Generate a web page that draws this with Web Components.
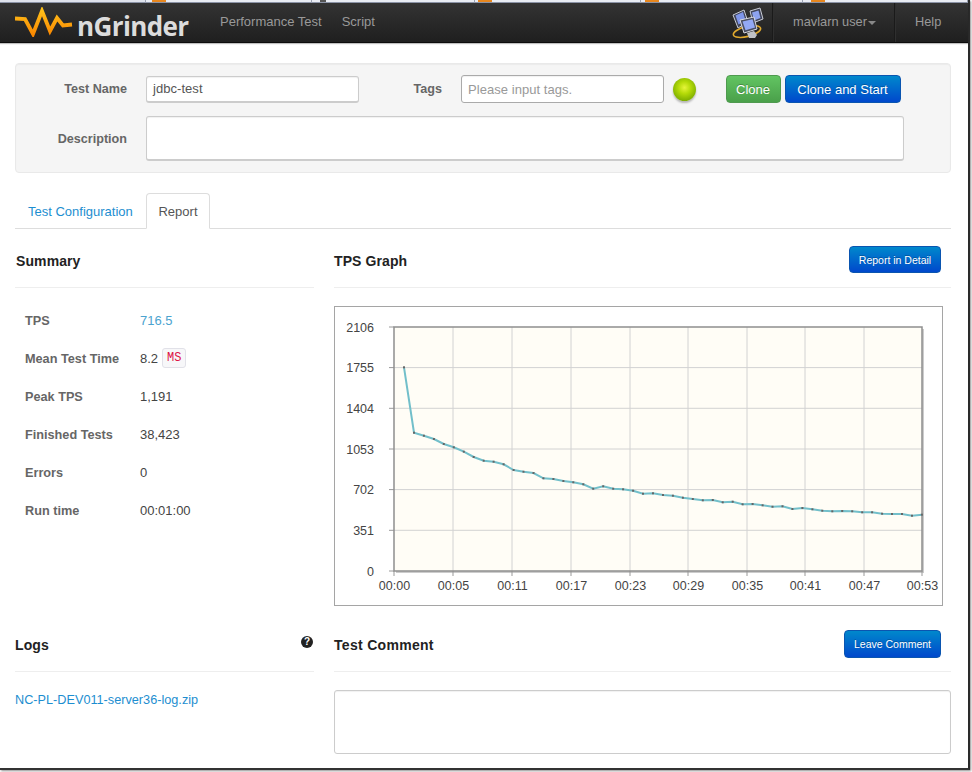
<!DOCTYPE html>
<html lang="en">
<head>
<meta charset="utf-8">
<title>nGrinder</title>
<style>
html,body{margin:0;padding:0;background:#fff;}
body{font-family:"Liberation Sans",Arial,sans-serif;font-size:13px;color:#555;}
</style>
</head>
<body>
<ng-app>
  <ng-strip slot="strip"></ng-strip>
  <ng-navbar slot="nav"></ng-navbar>
  <ng-test-form></ng-test-form>
  <ng-tabs></ng-tabs>
  <ng-report></ng-report>
</ng-app>
<script>
function define(name, html, setup){
  customElements.define(name, class extends HTMLElement{
    connectedCallback(){
      if(this.shadowRoot) return;
      const r=this.attachShadow({mode:'open'});
      r.innerHTML = typeof html==='function' ? html(this) : html;
      if(setup) setup(r,this);
    }
  });
}

define('ng-app',`<style>
:host{display:block;width:972px;height:772px;overflow:hidden;position:relative;background:#fff;}
.frame{width:968px;height:768px;box-sizing:content-box;border-right:2px solid #2a2a2a;border-bottom:2px solid #333;box-shadow:1px 1px 2px rgba(0,0,0,.45);display:flex;flex-direction:column;}
main{padding:20px 17px 0 15px;display:flex;flex-direction:column;}
</style>
<div class="frame"><slot name="strip"></slot><slot name="nav"></slot><main><slot></slot></main></div>`);

define('ng-strip',`<style>
:host{display:flex;height:3px;background:#eef0f5;}
div{box-sizing:border-box;height:3px;border-bottom:1px solid #8b93a6;border-right:1px solid #9aa1b2;background:#e9ecf3;position:relative;flex:none;}
i{display:block;position:absolute;top:0;height:2px;width:14px;background:#e8871e;}
i.d{background:#555;width:6px}
</style>
<div style="width:146px;background:#dfe3ec"></div>
<div style="width:166px"><i style="left:6px"></i></div>
<div style="width:163px"><i class="d" style="left:8px"></i></div>
<div style="width:166px"><i style="left:3px"></i></div>
<div style="width:162px"><i style="left:4px"></i></div>
<div style="width:165px"><i style="left:8px"></i></div>`);

define('ng-navbar',`<style>
:host{display:flex;align-items:stretch;height:40px;box-sizing:border-box;background:linear-gradient(#333,#1f1f1f);border-bottom:1px solid #0c0c0c;box-shadow:0 1px 1px rgba(0,0,0,.25);font:13px "Liberation Sans",Arial,sans-serif;color:#999;}
.brand{display:flex;align-items:flex-start;padding-left:15px;width:205px;box-sizing:border-box;flex:none;}
.brand svg{flex:none;display:block;margin-top:4px}
.brand b{font:700 26px/40px "Open Sans",sans-serif;color:#dcdcdc;margin-left:4px;letter-spacing:-.6px;margin-top:3px;white-space:nowrap}
.links{display:flex;gap:20px;align-items:center;margin-top:-2px;flex:1;}
.pc{display:flex;align-items:center;margin-right:10px;margin-top:1px}
.item{display:flex;align-items:center;border-left:1px solid #2f2f2f;padding-bottom:2px;box-shadow:-1px 0 0 #1a1a1a;font-size:12.800px}
.user{width:122px;padding-left:19px;box-sizing:border-box;margin-left:-1px}
.help{width:73px;padding-left:19px;box-sizing:border-box;}
.caret{display:inline-block;border:4px solid transparent;border-top-color:#888;border-bottom:0;margin-left:1px;margin-top:2px}
</style>
<div class="brand">
<svg width="58" height="30" viewBox="0 0 58 30"><defs><linearGradient id="lg" gradientUnits="userSpaceOnUse" x1="0" y1="2" x2="0" y2="29"><stop offset="0" stop-color="#ffc21a"/><stop offset="1" stop-color="#f98500"/></linearGradient></defs>
<path d="M0 11.500 10 12 18 27 27 4 35 24 42 11 48 18.500 57 17.500" fill="none" stroke="url(#lg)" stroke-width="3.800" stroke-linejoin="miter" stroke-miterlimit="3"/></svg>
<b>nGrinder</b></div>
<div class="links" style="margin-left:15px"><span>Performance Test</span><span>Script</span></div>
<div class="pc">
<svg width="33" height="33" viewBox="0 0 33 33">
<ellipse cx="16" cy="24.5" rx="14" ry="5" fill="none" stroke="#e0a92e" stroke-width="1.6" transform="rotate(-14 16 24.5)"/>
<path d="M2 8 13 3l4 12-10 6z" fill="#3f4458" stroke="#c9ccd6" stroke-width="1"/><path d="M4.500 8.500 12 5l2.500 8.500-7 4z" fill="#7f96ea"/>
<path d="M19 4l10-3 3 11-10 4z" fill="#3f4458" stroke="#c9ccd6" stroke-width="1"/><path d="M21 5.500l6.500-2 2 7.500-6.500 2.500z" fill="#8da3f0"/>
<path d="M9 13l14-3 3 12-13 4z" fill="#4b4f62" stroke="#d8dae2" stroke-width="1"/><path d="M11.500 14.500 21.500 12.300 24 20.500 14.500 23.300z" fill="#93a9f5"/>
<path d="M16 26l7-2 3 4-2 3h-6z" fill="#bfc1c6"/>
</svg></div>
<div class="item user"><span>mavlarn user</span><i class="caret"></i></div>
<div class="item help"><span>Help</span></div>`);

define('ng-btn',(h)=>`<style>
:host{display:inline-flex;align-items:center;justify-content:center;box-sizing:border-box;height:${h.getAttribute('h')||28}px;width:${h.getAttribute('w')}px;border-radius:4px;color:#fff;font:${h.getAttribute('fs')||13}px "Liberation Sans",Arial,sans-serif;text-shadow:0 -1px 0 rgba(0,0,0,.25);flex:none;}
:host([kind=green]){background:linear-gradient(#62c462,#4aa04a);border:1px solid #4f9a4f;}
:host([kind=blue]){background:linear-gradient(#0088cc,#0048cc);border:1px solid #0a55b0;}
</style><slot></slot>`);

define('ng-field',(h)=>`<style>
:host{box-sizing:border-box;background:#fff;border:1px solid #ccc;border-bottom-width:2px;border-right-width:1.500px;border-radius:3px;box-shadow:inset 0 1px 1px rgba(0,0,0,.06);padding:0 6px;color:#555;font:13px "Liberation Sans",Arial,sans-serif;letter-spacing:.05px;display:flex;align-items:center;flex:none;}
:host([dark]){border:1.500px solid #aaa;color:#999}
</style><slot></slot>`);

define('ng-label',`<style>
:host{display:block;font:bold 12.600px "Liberation Sans",Arial,sans-serif;color:#666;text-align:right;flex:none;}
</style><slot></slot>`);

define('ng-test-form',`<style>
:host{display:flex;flex-direction:column;gap:13px;box-sizing:border-box;height:110px;padding:11px 46px 0 0;background:#f5f5f5;border:1px solid #e9e9e9;border-radius:4px;box-shadow:inset 0 1px 1px rgba(0,0,0,.04);}
.row{display:flex;align-items:center;}
ng-label.a{width:111px;margin-right:19px}
.ball{width:23px;height:23px;border-radius:50%;flex:none;margin:0 29.500px 0 9px;background:radial-gradient(circle at 50% 42%,#e6f53a 0,#b4da08 35%,#76a800 80%,#5a8a00 100%);box-shadow:0 2px 2px rgba(0,0,0,.25);}
</style>
<div class="row" style="height:28px">
 <ng-label class="a">Test Name</ng-label>
 <ng-field style="width:213px;height:27px">jdbc-test</ng-field>
 <ng-label style="width:83px;margin-right:19px">Tags</ng-label>
 <ng-field dark style="width:203px;height:28px">Please input tags.</ng-field>
 <div class="ball"></div>
 <ng-btn kind="green" w="55" h="28">Clone</ng-btn>
 <ng-btn kind="blue" w="116" h="28" style="margin-left:4px">Clone and Start</ng-btn>
</div>
<div class="row">
 <ng-label class="a">Description</ng-label>
 <ng-field style="width:758px;height:45px"></ng-field>
</div>`);

define('ng-tabs',`<style>
:host{display:flex;box-sizing:border-box;height:36px;margin-top:20px;border-bottom:1px solid #ddd;font:13px "Liberation Sans",Arial,sans-serif;}
span{display:flex;align-items:center;box-sizing:border-box;height:36px;white-space:nowrap;}
.l{color:#1d8ed0;padding:0 0 0 13px;width:131px}
.on{color:#555;width:64px;justify-content:center;background:#fff;border:1px solid #ddd;border-bottom-color:#fff;border-radius:4px 4px 0 0;}
</style><span class="l">Test Configuration</span><span class="on">Report</span>`);

define('ng-head',(h)=>`<style>
:host{display:flex;justify-content:space-between;box-sizing:border-box;border-bottom:1px solid #eee;color:#222;font:bold 14px "Liberation Sans",Arial,sans-serif;height:${h.getAttribute('h')||59}px;padding-top:${h.getAttribute('pt')||17}px;align-items:flex-start;}
.t{height:30px;display:flex;align-items:center;margin-left:${h.getAttribute('ml')||0}px}
</style><div class="t"><slot name="t"></slot></div><slot></slot>`);

define('ng-stat',(h)=>`<style>
:host{display:flex;align-items:center;height:38px;padding-left:10px;font:13px "Liberation Sans",Arial,sans-serif;color:#444;}
b{width:115px;color:#666;font-size:12.700px;flex:none;position:relative;top:.5px}
</style><b>${h.getAttribute('k')}</b><slot></slot>`);

define('ng-chart',()=>{
  const ys=[367.3,432.7,435.7,439,444,447.3,451.7,457,460.7,461.7,464.3,470,471.7,473,478.3,479,481,482.3,484.3,488.7,486.3,488.7,489.3,490.7,493.7,493.3,495,495.7,497.7,499,500.3,500,502.3,501.7,504.3,504,505.3,506.7,506.3,509,508,509.3,510.7,511.3,511,511.3,512.3,512.3,513.7,514,514,515.7,514.7];
  const ox=334, oy=306;
  const pts=ys.map((y,i)=>[(404+i*9.96-ox).toFixed(1),(y-oy).toFixed(1)]);
  const xs=[394,453,512,571,630,688,747,805,864,922], xl=['00:00','00:05','00:11','00:17','00:23','00:29','00:35','00:41','00:47','00:53'];
  const yy=[327,367.6,408.3,449,489.6,530.3,571], yl=['2106','1755','1404','1053','702','351','0'];
  let s='';
  xs.forEach((x,i)=>{const X=x-ox;
    if(i&&i<9)s+=`<line x1="${X}" x2="${X}" y1="21" y2="265" stroke="#d2d2d2"/>`;
    s+=`<line x1="${X}" x2="${X}" y1="265" y2="270" stroke="#999"/>`;
    s+=`<text x="${X+.5}" y="283.500" text-anchor="middle">${xl[i]}</text>`;});
  yy.forEach((y,i)=>{const Y=y-oy;
    if(i&&i<6)s+=`<line x1="60" x2="588" y1="${Y}" y2="${Y}" stroke="#d2d2d2"/>`;
    s+=`<line x1="55" x2="60" y1="${Y}" y2="${Y}" stroke="#999"/>`;
    s+=`<text x="40" y="${Y+4.500}" text-anchor="end">${yl[i]}</text>`;});
  const line=pts.map(p=>p.join(',')).join(' ');
  const dots=pts.map(p=>`<rect x="${p[0]-1}" y="${p[1]-1}" width="2" height="2" fill="#666"/>`).join('');
  return `<style>
:host{display:block;box-sizing:border-box;width:609px;height:300px;border:1.500px solid #a5a5a5;margin-top:18px;background:#fff;}
svg{display:block;margin:-1.500px;font:12.500px "Liberation Sans",Arial,sans-serif;fill:#444;overflow:visible}
</style>
<svg width="609" height="300" viewBox="0 0 609 300">
<rect x="62" y="23" width="528" height="244" fill="#aaa" opacity=".6"/>
<rect x="60" y="21" width="528" height="244" fill="#fffdf6"/>
${s}
<rect x="60" y="21" width="528" height="244" fill="none" stroke="#8e8e8e" stroke-width="1.500"/>
<polyline points="${line}" fill="none" stroke="#72bfca" stroke-width="2"/>
${dots}
</svg>`;
});

define('ng-report',`<style>
:host{display:grid;grid-template-columns:299px 617px;column-gap:20px;grid-template-rows:377px auto;font:13px "Liberation Sans",Arial,sans-serif;}
.tps{color:#4ba3cf;font-weight:normal}
code{margin-left:4px;display:inline-block;height:18px;padding:0 4px;font:12px/19px "Liberation Mono",monospace;color:#d14;background:#f7f7f9;border:1px solid #e1e1e8;border-radius:3px;}
a{color:#1d8ed0;font-size:12.700px;display:block;margin-top:21px}
.hq{width:12px;height:12px;border-radius:50%;background:#222;color:#fff;font:bold 10px/12px "Liberation Sans",sans-serif;text-align:center;margin:6px 1px 0 0}
.note{height:64px;margin-top:18px;box-sizing:border-box;border:1px solid #ccc;border-radius:3px;box-shadow:inset 0 1px 1px rgba(0,0,0,.06)}
.sp{margin-top:13px}
.h{letter-spacing:.1px}
</style>
<section>
 <ng-head ml="1"><span class="h" slot="t">Summary</span></ng-head>
 <div class="sp">
  <ng-stat k="TPS"><span class="tps">716.5</span></ng-stat>
  <ng-stat k="Mean Test Time"><span>8.2</span><code>MS</code></ng-stat>
  <ng-stat k="Peak TPS"><span>1,191</span></ng-stat>
  <ng-stat k="Finished Tests"><span>38,423</span></ng-stat>
  <ng-stat k="Errors"><span>0</span></ng-stat>
  <ng-stat k="Run time"><span>00:01:00</span></ng-stat>
 </div>
</section>
<section>
 <ng-head><span class="h" slot="t">TPS Graph</span><ng-btn kind="blue" w="92" h="27" fs="10.500" style="margin-right:10px">Report in Detail</ng-btn></ng-head>
 <ng-chart></ng-chart>
</section>
<section>
 <ng-head h="66" pt="24"><span class="h" slot="t">Logs</span><div class="hq">?</div></ng-head>
 <a>NC-PL-DEV011-server36-log.zip</a>
</section>
<section>
 <ng-head h="66" pt="24"><span class="h" style="letter-spacing:.3px" slot="t">Test Comment</span><ng-btn kind="blue" w="97" h="28" fs="10.500" style="margin-right:10px">Leave Comment</ng-btn></ng-head>
 <div class="note"></div>
</section>`);
</script>
</body>
</html>
